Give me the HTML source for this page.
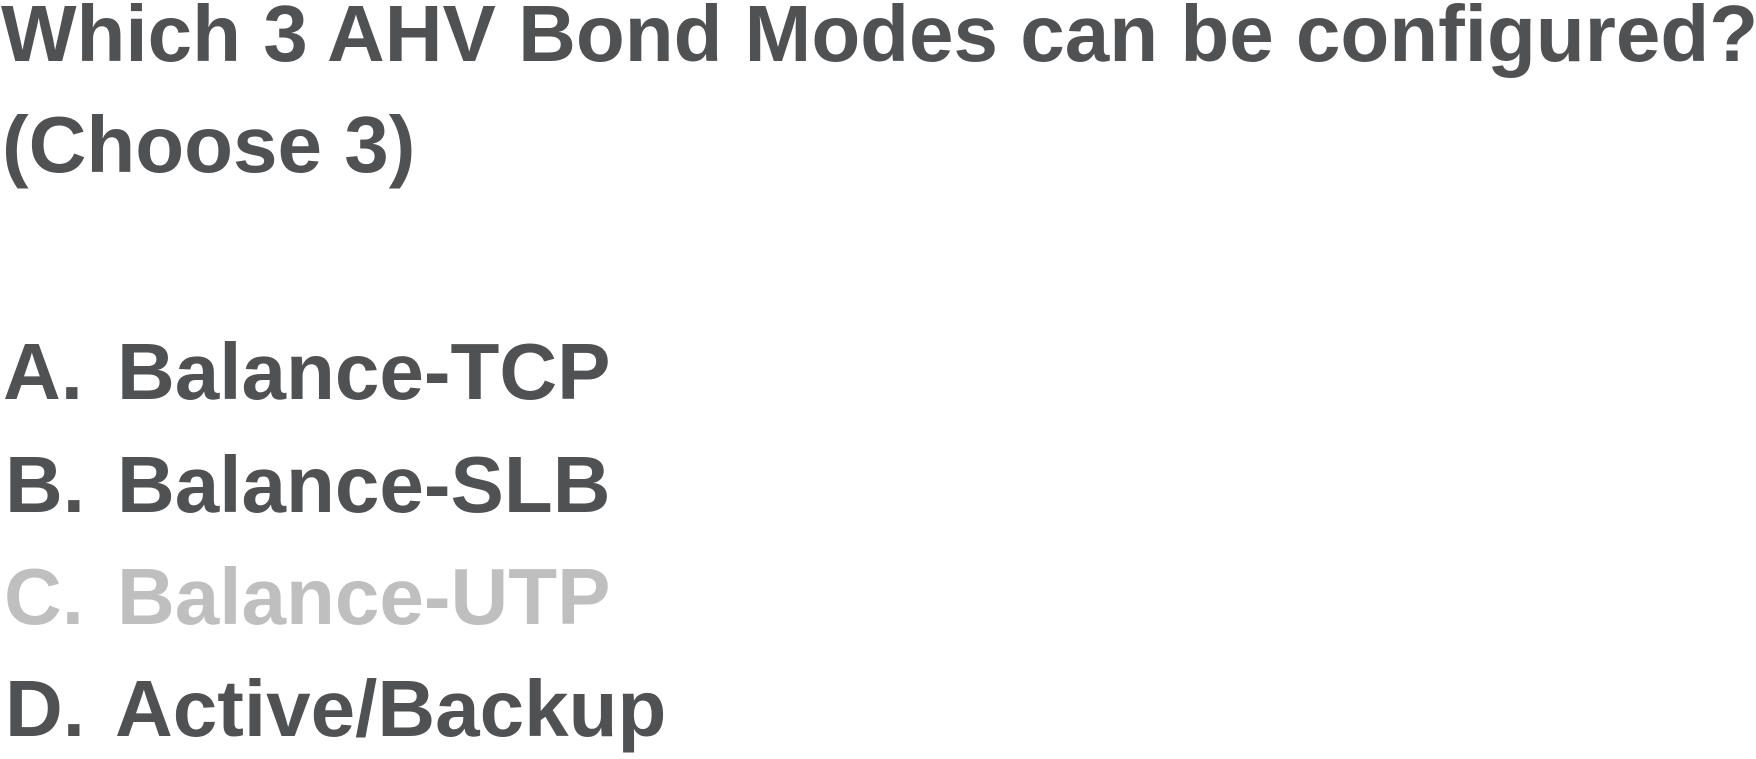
<!DOCTYPE html>
<html><head><meta charset="utf-8"><style>
html,body{margin:0;padding:0;background:#fff;width:1756px;height:759px;overflow:hidden}
.t{position:absolute;font-family:"Liberation Sans",Arial,sans-serif;font-weight:bold;font-size:80px;color:#505153;white-space:nowrap;line-height:1}
.h{font-size:80px}
.g{color:#bfbfbf}
</style></head><body>
<div class="t h" style="left:1px;top:-6px">Which 3 AHV Bond Modes can be configured?</div>
<div class="t h" style="left:2px;top:105px">(Choose 3)</div>
<div class="t" style="left:3px;top:332px">A.</div><div class="t" style="left:117px;top:332px">Balance-TCP</div>
<div class="t" style="left:5px;top:445px">B.</div><div class="t" style="left:117px;top:445px">Balance-SLB</div>
<div class="t g" style="left:4px;top:557px">C.</div><div class="t g" style="left:117px;top:557px">Balance-UTP</div>
<div class="t" style="left:5px;top:669px">D.</div><div class="t" style="left:115px;top:669px">Active/Backup</div>
</body></html>
